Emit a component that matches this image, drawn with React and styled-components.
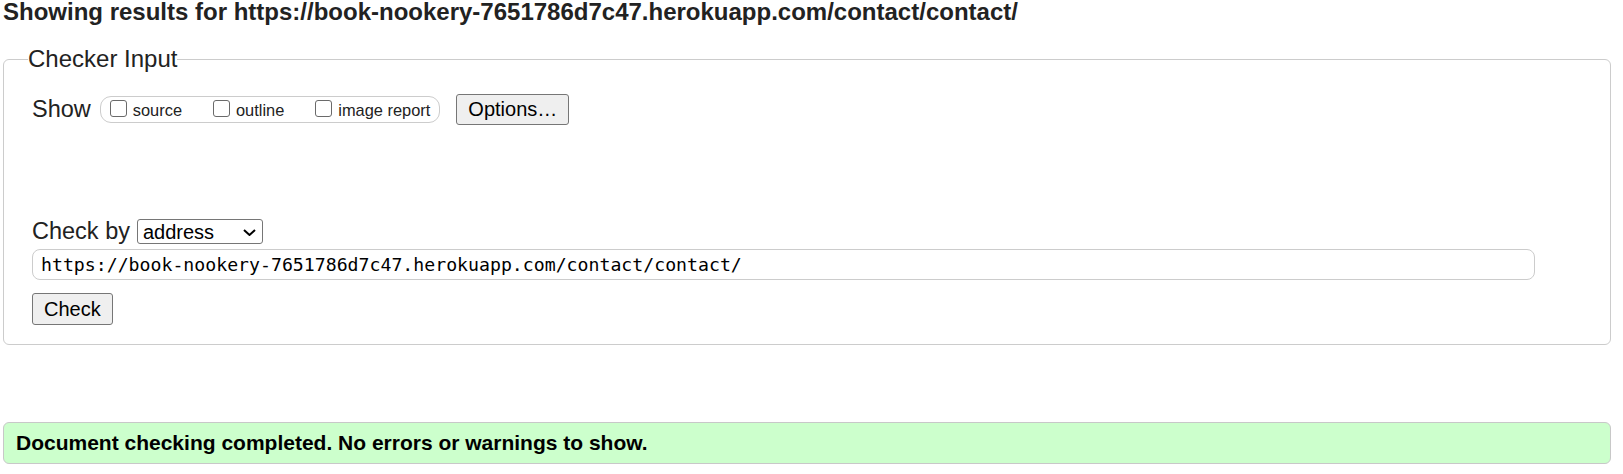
import React from "react";
import styled, { createGlobalStyle } from "styled-components";

const Global = createGlobalStyle`
  html, body { margin: 0; padding: 0; background: #fff; }
  body { font-family: "Liberation Sans", Arial, sans-serif; color: #222; }
`;

const Page = styled.div`
  padding: 0 12px 0 3px;
`;

const Heading = styled.h2`
  margin: 0;
  font-size: 24px;
  line-height: 24px;
  font-weight: bold;
  color: #222;
`;

const Fieldset = styled.fieldset`
  margin: 21px 0 0 0;
  padding: 21px 28px 19px 28px;
  border: 1px solid #cccccc;
  border-radius: 6px;
  min-inline-size: 0;
`;

const Legend = styled.legend`
  padding: 0;
  margin-left: -4px;
  font-size: 24px;
  line-height: normal;
  color: #222;
`;

const Row = styled.div`
  display: flex;
  align-items: center;
  height: ${(p) => p.$h}px;
  margin-top: ${(p) => p.$mt || 0}px;
`;

const Label = styled.span`
  font-size: 23.5px;
  line-height: normal;
  color: #222;
  margin-right: ${(p) => p.$gap}px;
`;

const Group = styled.div`
  display: flex;
  align-items: center;
  height: 25px;
  border: 1px solid #cccccc;
  border-radius: 11px;
  padding: 0 9px;
  gap: 31px;
  margin-right: 16px;
`;

const CheckLabel = styled.label`
  display: flex;
  align-items: flex-end;
  font-size: 16.4px;
  line-height: normal;
  color: #222;
`;

const Box = styled.input.attrs({ type: "checkbox" })`
  appearance: none;
  width: 17px;
  height: 17px;
  margin: 0 6px 3px 0;
  border: 1px solid #6a6a6a;
  border-radius: 3px;
  background: #fff;
  box-sizing: border-box;
`;

const Button = styled.button`
  height: ${(p) => p.$h}px;
  padding: 0 11px;
  margin: 0;
  margin-top: ${(p) => p.$mt || 0}px;
  background: #efefef;
  border: 1px solid #767676;
  border-radius: 3px;
  font-family: "Liberation Sans", Arial, sans-serif;
  font-size: 20px;
  color: #000;
  display: block;
`;

const SelectWrap = styled.div`
  position: relative;
  width: 126px;
  height: 25px;
`;

const Select = styled.select`
  appearance: none;
  width: 126px;
  height: 25px;
  margin: 0;
  padding: 0 0 0 5px;
  border: 1px solid #767676;
  border-radius: 3px;
  background: #fff;
  font-family: "Liberation Sans", Arial, sans-serif;
  font-size: 20px;
  color: #000;
`;

const Chevron = styled.svg`
  position: absolute;
  right: 7px;
  top: 10px;
  pointer-events: none;
`;

const UrlInput = styled.input`
  display: block;
  box-sizing: border-box;
  width: 1503px;
  height: 31px;
  margin: 5px 0 0 0;
  padding: 0 8px;
  border: 1px solid #cccccc;
  border-radius: 8px;
  font-family: "DejaVu Sans Mono", "Liberation Mono", monospace;
  font-size: 18.2px;
  color: #000;
  background: #fff;
`;

const Success = styled.div`
  margin-top: 77px;
  height: 40px;
  display: flex;
  align-items: center;
  padding: 0 12px;
  background: #ccffcc;
  border: 1px solid #c8c8c8;
  border-radius: 6px;
  font-size: 21px;
  font-weight: bold;
  color: #000;
`;

export default function App() {
  const url = "https://book-nookery-7651786d7c47.herokuapp.com/contact/contact/";
  return (
    <Page>
      <Global />
      <Heading>Showing results for {url}</Heading>
      <Fieldset>
        <Legend>Checker Input</Legend>
        <Row $h={31}>
          <Label $gap={9}>Show</Label>
          <Group>
            <CheckLabel>
              <Box />
              source
            </CheckLabel>
            <CheckLabel>
              <Box />
              outline
            </CheckLabel>
            <CheckLabel>
              <Box />
              image report
            </CheckLabel>
          </Group>
          <Button $h={31}>Options…</Button>
        </Row>
        <Row $h={25} $mt={94}>
          <Label $gap={7}>Check by</Label>
          <SelectWrap>
            <Select defaultValue="address">
              <option value="address">address</option>
              <option value="file">file upload</option>
              <option value="text">text input</option>
            </Select>
            <Chevron width="13" height="7" viewBox="0 0 13 7">
              <path d="M1 1 L6.5 6 L12 1" fill="none" stroke="#000" strokeWidth="2" />
            </Chevron>
          </SelectWrap>
        </Row>
        <UrlInput defaultValue={url} />
        <Button $h={32} $mt={13}>Check</Button>
      </Fieldset>
      <Success>Document checking completed. No errors or warnings to show.</Success>
    </Page>
  );
}
